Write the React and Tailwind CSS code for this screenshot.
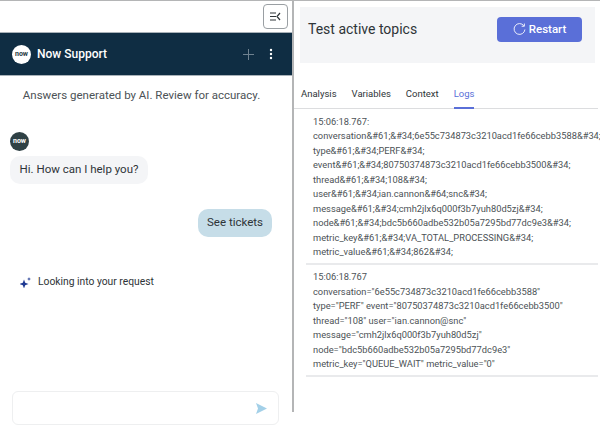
import { useState } from "react";

const tabs = ["Analysis", "Variables", "Context", "Logs"];

const firstLog = [
  "15:06:18.767:",
  "conversation&#61;&#34;6e55c734873c3210acd1fe66cebb3588&#34;",
  "type&#61;&#34;PERF&#34;",
  "event&#61;&#34;80750374873c3210acd1fe66cebb3500&#34;",
  "thread&#61;&#34;108&#34;",
  "user&#61;&#34;ian.cannon&#64;snc&#34;",
  "message&#61;&#34;cmh2jlx6q000f3b7yuh80d5zj&#34;",
  "node&#61;&#34;bdc5b660adbe532b05a7295bd77dc9e3&#34;",
  "metric_key&#61;&#34;VA_TOTAL_PROCESSING&#34;",
  "metric_value&#61;&#34;862&#34;",
];

const secondLog = [
  "15:06:18.767",
  'conversation="6e55c734873c3210acd1fe66cebb3588"',
  'type="PERF" event="80750374873c3210acd1fe66cebb3500"',
  'thread="108" user="ian.cannon@snc"',
  'message="cmh2jlx6q000f3b7yuh80d5zj"',
  'node="bdc5b660adbe532b05a7295bd77dc9e3"',
  'metric_key="QUEUE_WAIT" metric_value="0"',
];

function NowLogo({ dark }) {
  return (
    <div
      className={`w-[19px] h-[19px] rounded-full flex items-center justify-center text-[7px] font-bold leading-none ${
        dark ? "bg-[#2f4145] text-white" : "bg-white text-[#1f3a44]"
      }`}
    >
      now
    </div>
  );
}

function LogEntry({ lines }) {
  return (
    <div className="pl-[7px] pt-[5.5px] pb-[3px] border-b-2 border-[#e9eaec] ml-[12px] mr-[2px] whitespace-nowrap">
      {lines.map((line, i) => (
        <div key={i} className="h-[14.5px] leading-[14.5px]">
          {line}
        </div>
      ))}
    </div>
  );
}

export default function App() {
  const [activeTab, setActiveTab] = useState("Logs");

  return (
    <div
      className="w-[600px] h-[429px] overflow-hidden bg-white border-t border-[#b4b5b6] flex text-[#2e3438]"
      style={{ fontFamily: 'Roboto, sans-serif' }}
    >
      <div className="w-[292px] shrink-0 flex flex-col">
        <div className="h-[31px] flex items-start justify-end pt-[3px] pr-[4px]">
          <button className="w-[25px] h-[25px] border border-[#9a9fa3] rounded-[4px] flex items-center justify-center">
            <svg width="11" height="9" viewBox="0 0 11 9" fill="none" stroke="#2e3438" strokeWidth="1.2">
              <path d="M0 1h6M0 4.5h6M0 8h6M10 1L7 4.5L10 8" />
            </svg>
          </button>
        </div>

        <div className="h-[44px] bg-[#0f2d43] border-y border-[#a9b2b9] flex items-center pl-[12px] pr-[19px] text-white">
          <NowLogo />
          <span className="ml-[6px] text-[12px] font-medium">Now Support</span>
          <svg className="ml-auto" width="11" height="11" viewBox="0 0 11 11" stroke="#6f8290" strokeWidth="1">
            <path d="M5.5 0v11M0 5.5h11" />
          </svg>
          <svg className="ml-[15px]" width="4" height="12" viewBox="0 0 4 12" fill="#ffffff">
            <circle cx="2" cy="2" r="1.2" />
            <circle cx="2" cy="6" r="1.2" />
            <circle cx="2" cy="10" r="1.2" />
          </svg>
        </div>

        <div className="mt-[9px] text-center text-[11.5px] leading-[20px] text-[#4c5256] pr-[9px]">
          Answers generated by AI. Review for accuracy.
        </div>

        <div className="mt-[27px] pl-[10px]">
          <NowLogo dark />
        </div>

        <div className="mt-[5px] ml-[10px] w-[138px] h-[28px] rounded-[10px] bg-[#f4f5f7] flex items-center justify-center text-[11.5px]">
          Hi. How can I help you?
        </div>

        <div className="mt-[25px] mr-[20px] self-end w-[74px] h-[28px] rounded-[10px] bg-[#c6dde8] flex items-center justify-center text-[11.5px]">
          See tickets
        </div>

        <div className="mt-[37px] pl-[20px] flex items-center">
          <svg width="11" height="11" viewBox="0 0 11 11" fill="#1f3a93">
            <path d="M4 2.500L5.200 5.800L8.500 7L5.200 8.200L4 11.500L2.800 8.200L-0.500 7L2.800 5.800Z" />
            <path d="M9 0L9.500 1.500L11 2L9.500 2.500L9 4L8.500 2.500L7 2L8.500 1.500Z" />
          </svg>
          <span className="ml-[7px] text-[10.3px] leading-[16px]">Looking into your request</span>
        </div>

        <div className="mt-auto mb-[4px] ml-[12px] mr-[13px] h-[34px] border border-[#eeeff0] rounded-[6px] flex items-center justify-end pr-[11px]">
          <svg width="11" height="11" viewBox="0 0 11 11" fill="#a3d0e8">
            <path d="M0 0L11 5.500L0 11L2 5.500Z" />
          </svg>
        </div>
      </div>

      <div className="w-[308px] shrink-0 h-[411px] border-l-2 border-[#b4b5b6] flex flex-col">
        <div className="mt-[6px] ml-[6px] mr-[5px] h-[56px] bg-[#f4f5f7] flex items-start justify-between pl-[8px] pr-[13px] pt-[10px]">
          <span className="text-[14px] leading-[24px]">Test active topics</span>
          <button className="w-[85px] h-[25px] rounded-[4px] bg-[#5a6fd8] flex items-center justify-center text-white text-[11.5px] font-medium">
            <svg className="mr-[3px]" width="13" height="13" viewBox="0 0 12 12" fill="none" stroke="#ffffff" strokeWidth="0.8">
              <path d="M10 2.500A5 5 0 1 0 11 6M10.500 0.500V3H8" />
            </svg>
            Restart
          </button>
        </div>

        <div className="mt-[18px] pl-[7px] mr-[2px] flex gap-[15px] border-b border-[#dcdddf] h-[28px] text-[9.5px]">
          {tabs.map((tab) => (
            <button
              key={tab}
              onClick={() => setActiveTab(tab)}
              className={`h-[28px] leading-[20px] pb-[1px] border-b-2 ${
                activeTab === tab ? "border-[#5a6fd8] text-[#5a6fd8]" : "border-transparent"
              }`}
            >
              {tab}
            </button>
          ))}
        </div>

        <div className="text-[9.3px] text-[#4c5256]">
          <LogEntry lines={firstLog} />
          <LogEntry lines={secondLog} />
        </div>
      </div>
    </div>
  );
}
